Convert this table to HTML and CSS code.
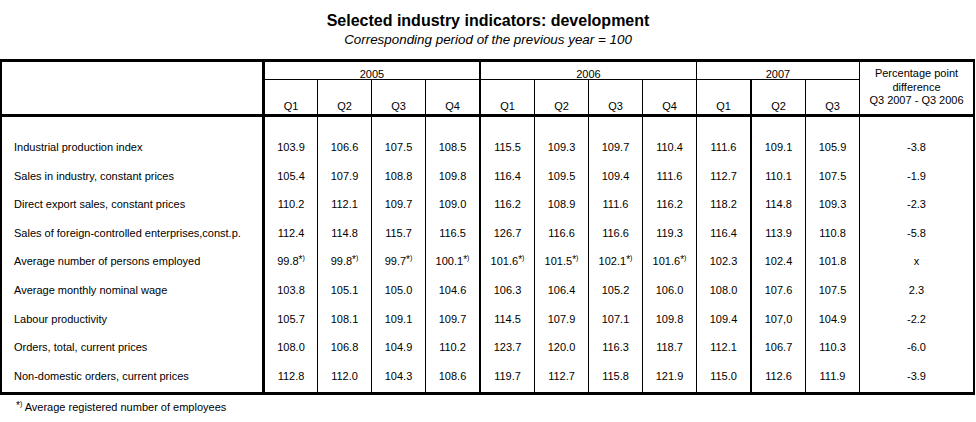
FILE: index.html
```html
<!DOCTYPE html>
<html lang="en">
<head>
<meta charset="utf-8">
<title>Selected industry indicators: development</title>
<link rel="stylesheet" href="styles.css">
</head>
<body>
<div class="page">
  <h1 class="title">Selected industry indicators: development</h1>
  <p class="subtitle">Corresponding period of the previous year = 100</p>

  <div class="grid">
    <div class="h h-label"></div>
    <div class="h h-year y4 thick">2005</div>
    <div class="h h-year y4">2006</div>
    <div class="h h-year y3">2007</div>
    <div class="h h-pct">Percentage point<br>difference<br>Q3 2007 - Q3 2006</div>
    <div class="h h-q">Q1</div>
    <div class="h h-q">Q2</div>
    <div class="h h-q">Q3</div>
    <div class="h h-q thick">Q4</div>
    <div class="h h-q">Q1</div>
    <div class="h h-q">Q2</div>
    <div class="h h-q">Q3</div>
    <div class="h h-q">Q4</div>
    <div class="h h-q thick">Q1</div>
    <div class="h h-q">Q2</div>
    <div class="h h-q">Q3</div>

    <div class="row first">
      <div class="c">Industrial production index</div>
      <div class="c">103.9</div><div class="c">106.6</div><div class="c">107.5</div><div class="c">108.5</div>
      <div class="c">115.5</div><div class="c">109.3</div><div class="c">109.7</div><div class="c">110.4</div>
      <div class="c">111.6</div><div class="c">109.1</div><div class="c">105.9</div>
      <div class="c">-3.8</div>
    </div>
    <div class="row">
      <div class="c">Sales in industry, constant prices</div>
      <div class="c">105.4</div><div class="c">107.9</div><div class="c">108.8</div><div class="c">109.8</div>
      <div class="c">116.4</div><div class="c">109.5</div><div class="c">109.4</div><div class="c">111.6</div>
      <div class="c">112.7</div><div class="c">110.1</div><div class="c">107.5</div>
      <div class="c">-1.9</div>
    </div>
    <div class="row">
      <div class="c">Direct export sales, constant prices</div>
      <div class="c">110.2</div><div class="c">112.1</div><div class="c">109.7</div><div class="c">109.0</div>
      <div class="c">116.2</div><div class="c">108.9</div><div class="c">111.6</div><div class="c">116.2</div>
      <div class="c">118.2</div><div class="c">114.8</div><div class="c">109.3</div>
      <div class="c">-2.3</div>
    </div>
    <div class="row">
      <div class="c">Sales of foreign-controlled enterprises,const.p.</div>
      <div class="c">112.4</div><div class="c">114.8</div><div class="c">115.7</div><div class="c">116.5</div>
      <div class="c">126.7</div><div class="c">116.6</div><div class="c">116.6</div><div class="c">119.3</div>
      <div class="c">116.4</div><div class="c">113.9</div><div class="c">110.8</div>
      <div class="c">-5.8</div>
    </div>
    <div class="row">
      <div class="c">Average number of persons employed</div>
      <div class="c">99.8<sup class="note">*<span class="paren">)</span></sup></div>
      <div class="c">99.8<sup class="note">*<span class="paren">)</span></sup></div>
      <div class="c">99.7<sup class="note">*<span class="paren">)</span></sup></div>
      <div class="c">100.1<sup class="note">*<span class="paren">)</span></sup></div>
      <div class="c">101.6<sup class="note">*<span class="paren">)</span></sup></div>
      <div class="c">101.5<sup class="note">*<span class="paren">)</span></sup></div>
      <div class="c">102.1<sup class="note">*<span class="paren">)</span></sup></div>
      <div class="c">101.6<sup class="note">*<span class="paren">)</span></sup></div>
      <div class="c">102.3</div><div class="c">102.4</div><div class="c">101.8</div>
      <div class="c">x</div>
    </div>
    <div class="row">
      <div class="c">Average monthly nominal wage</div>
      <div class="c">103.8</div><div class="c">105.1</div><div class="c">105.0</div><div class="c">104.6</div>
      <div class="c">106.3</div><div class="c">106.4</div><div class="c">105.2</div><div class="c">106.0</div>
      <div class="c">108.0</div><div class="c">107.6</div><div class="c">107.5</div>
      <div class="c">2.3</div>
    </div>
    <div class="row">
      <div class="c">Labour productivity</div>
      <div class="c">105.7</div><div class="c">108.1</div><div class="c">109.1</div><div class="c">109.7</div>
      <div class="c">114.5</div><div class="c">107.9</div><div class="c">107.1</div><div class="c">109.8</div>
      <div class="c">109.4</div><div class="c">107,0</div><div class="c">104.9</div>
      <div class="c">-2.2</div>
    </div>
    <div class="row">
      <div class="c">Orders, total, current prices</div>
      <div class="c">108.0</div><div class="c">106.8</div><div class="c">104.9</div><div class="c">110.2</div>
      <div class="c">123.7</div><div class="c">120.0</div><div class="c">116.3</div><div class="c">118.7</div>
      <div class="c">112.1</div><div class="c">106.7</div><div class="c">110.3</div>
      <div class="c">-6.0</div>
    </div>
    <div class="row last">
      <div class="c">Non-domestic orders, current prices</div>
      <div class="c">112.8</div><div class="c">112.0</div><div class="c">104.3</div><div class="c">108.6</div>
      <div class="c">119.7</div><div class="c">112.7</div><div class="c">115.8</div><div class="c">121.9</div>
      <div class="c">115.0</div><div class="c">112.6</div><div class="c">111.9</div>
      <div class="c">-3.9</div>
    </div>
  </div>

  <p class="footnote"><sup class="note">*<span class="paren">)</span></sup> Average registered number of employees</p>
</div>
</body>
</html>
```

FILE: styles.css
```css
html, body {
  margin: 0;
  padding: 0;
  background: #ffffff;
}

.page {
  width: 976px;
  color: #000000;
  font-family: "Liberation Sans", Arial, sans-serif;
  font-size: 11px;
}

.title {
  margin: 0;
  padding-top: 12px;
  font-size: 16px;
  font-weight: bold;
  line-height: 18px;
  text-align: center;
}

.subtitle {
  margin: 2px 0 0 0;
  font-size: 13.4px;
  font-style: italic;
  line-height: 16px;
  text-align: center;
}

.grid {
  margin-top: 11px;
  width: 971px;
  display: grid;
  grid-template-columns: 263px 53px 54px 54px 55px 54px 54px 54px 54px 55px 54px 54px 113px;
  grid-template-rows: 18px 37px 44.6px repeat(7, 28.6px) 30.6px;
  border-style: solid;
  border-color: #000000;
  border-width: 3px 2px 3px 2px;
}

.h {
  box-sizing: border-box;
  border-style: solid;
  border-color: #000000;
  border-width: 0 1px 0 0;
  text-align: center;
  line-height: 13px;
}

.h-label {
  grid-row: span 2;
  border-right-width: 3px;
  border-bottom-width: 3px;
}

.h-year {
  padding-top: 6px;
  border-bottom-width: 1px;
}

.y4 { grid-column: span 4; }
.y3 { grid-column: span 3; }

.h-pct {
  grid-row: span 2;
  border-right-width: 0;
  border-bottom-width: 3px;
  padding-top: 5px;
  line-height: 13.5px;
}

.h-q {
  padding-top: 20px;
  border-bottom-width: 3px;
}

.thick { border-right-width: 2px; }

.row { display: contents; }

.c {
  box-sizing: border-box;
  border-right: 1px solid #000000;
  line-height: 28.6px;
  text-align: center;
  white-space: nowrap;
}

.row > .c:first-child {
  text-align: left;
  padding-left: 12px;
  border-right-width: 3px;
}

.row > .c:nth-child(5),
.row > .c:nth-child(10) {
  border-right-width: 2px;
}

.row > .c:last-child {
  border-right-width: 0;
}

.row.first > .c { padding-top: 16px; }
.row.last > .c { padding-bottom: 2px; }

.note {
  font-size: 10px;
  line-height: 0;
  vertical-align: 2px;
}

.paren {
  font-size: 7px;
  vertical-align: 3px;
}

.footnote {
  margin: 6px 0 0 0;
  padding-left: 16px;
  line-height: 13px;
}
```
